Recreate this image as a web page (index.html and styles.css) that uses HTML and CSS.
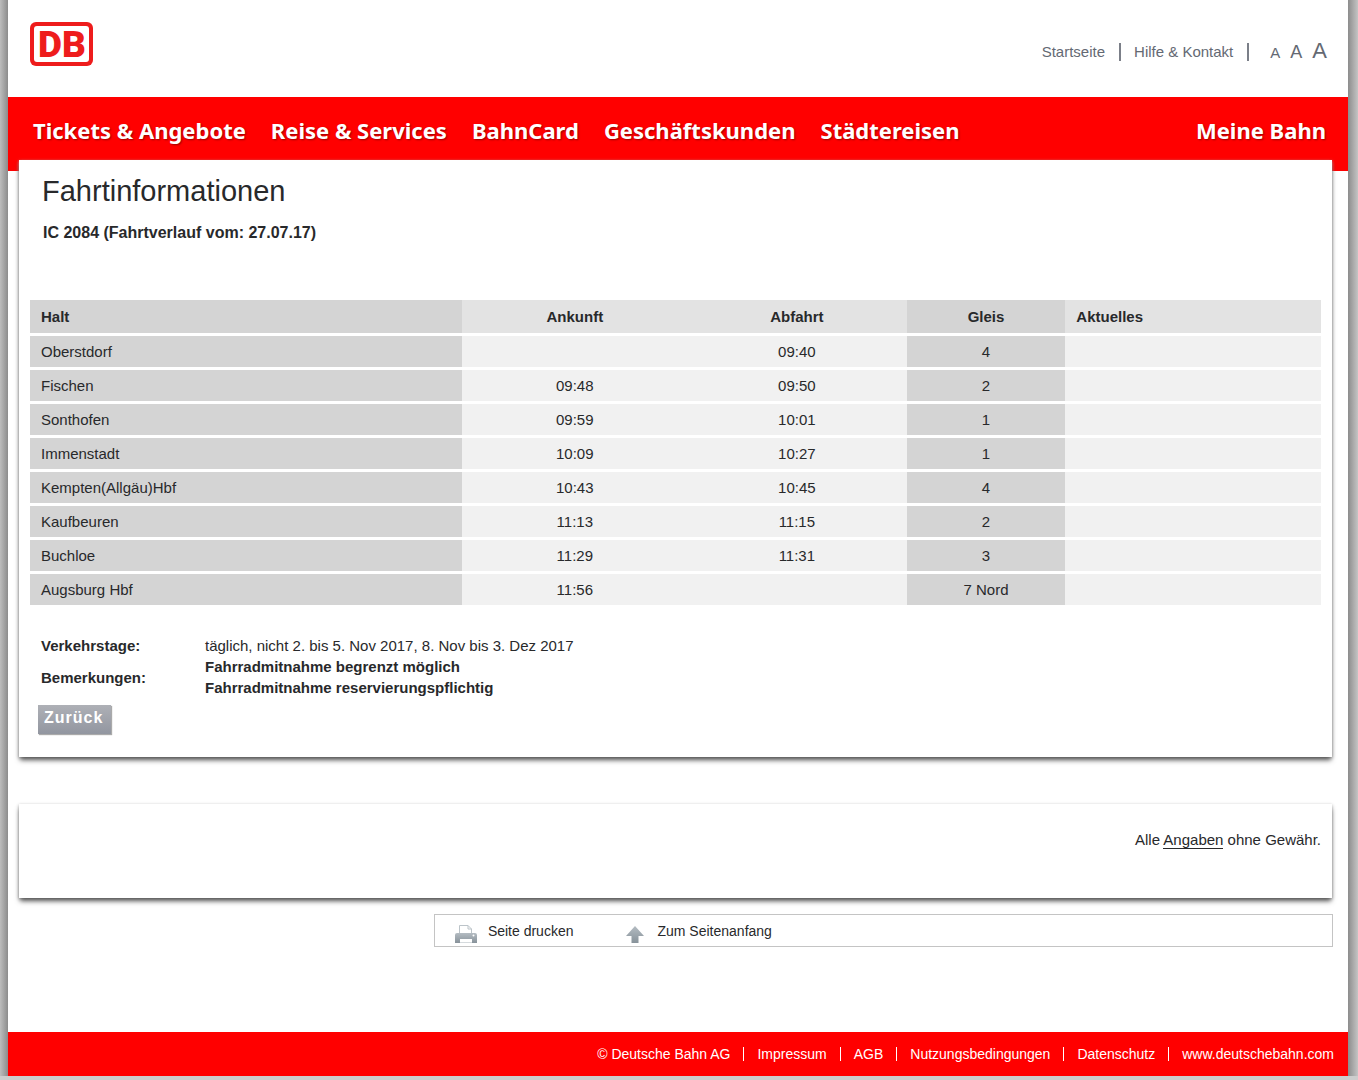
FILE: index.html
```html
<!DOCTYPE html>
<html lang="de">
<head>
<meta charset="utf-8">
<meta name="viewport" content="width=device-width, initial-scale=1">
<title>Fahrtinformationen</title>
<link rel="stylesheet" href="styles.css">
</head>
<body>
<div class="page">
  <header class="top">
    <a class="logo" href="#" aria-label="Deutsche Bahn">
      <svg width="63" height="44" viewBox="0 0 63 44">
        <rect x="0" y="0" width="63" height="44" rx="6" fill="#ee1c1c"/>
        <rect x="4" y="4" width="55" height="36" rx="3" fill="#fff"/>
        <text class="logo-text" x="32" y="35" text-anchor="middle">DB</text>
      </svg>
    </a>
    <nav class="meta">
      <a href="#">Startseite</a>
      <a href="#">Hilfe &amp; Kontakt</a>
      <div class="sizes">
        <button class="size size-s" type="button">A</button>
        <button class="size size-m" type="button">A</button>
        <button class="size size-l" type="button">A</button>
      </div>
    </nav>
  </header>
  <nav class="main-nav">
    <a href="#">Tickets &amp; Angebote</a>
    <a href="#">Reise &amp; Services</a>
    <a href="#">BahnCard</a>
    <a href="#">Geschäftskunden</a>
    <a href="#">Städtereisen</a>
    <a class="account" href="#">Meine Bahn</a>
  </nav>
  <main class="panel content">
    <h1>Fahrtinformationen</h1>
    <h2>IC 2084 (Fahrtverlauf vom: 27.07.17)</h2>
    <table class="stops">
      <thead>
        <tr><th class="halt">Halt</th><th class="arr">Ankunft</th><th class="dep">Abfahrt</th><th class="track">Gleis</th><th class="news">Aktuelles</th></tr>
      </thead>
      <tbody>
        <tr><td class="halt">Oberstdorf</td><td></td><td>09:40</td><td class="track">4</td><td></td></tr>
        <tr><td class="halt">Fischen</td><td>09:48</td><td>09:50</td><td class="track">2</td><td></td></tr>
        <tr><td class="halt">Sonthofen</td><td>09:59</td><td>10:01</td><td class="track">1</td><td></td></tr>
        <tr><td class="halt">Immenstadt</td><td>10:09</td><td>10:27</td><td class="track">1</td><td></td></tr>
        <tr><td class="halt">Kempten(Allgäu)Hbf</td><td>10:43</td><td>10:45</td><td class="track">4</td><td></td></tr>
        <tr><td class="halt">Kaufbeuren</td><td>11:13</td><td>11:15</td><td class="track">2</td><td></td></tr>
        <tr><td class="halt">Buchloe</td><td>11:29</td><td>11:31</td><td class="track">3</td><td></td></tr>
        <tr><td class="halt">Augsburg Hbf</td><td>11:56</td><td></td><td class="track">7 Nord</td><td></td></tr>
      </tbody>
    </table>
    <dl class="notes">
      <dt>Verkehrstage:</dt>
      <dd>täglich, nicht 2. bis 5. Nov 2017, 8. Nov bis 3. Dez 2017</dd>
      <dt>Bemerkungen:</dt>
      <dd class="strong">Fahrradmitnahme begrenzt möglich<br>Fahrradmitnahme reservierungspflichtig</dd>
    </dl>
    <button class="back" type="button">Zurück</button>
  </main>
  <section class="panel disclaimer">
    <p>Alle <a href="#">Angaben</a> ohne Gewähr.</p>
  </section>
  <nav class="tools">
    <a href="#">
      <svg width="22" height="18" viewBox="0 0 22 18">
        <defs><linearGradient id="g" x1="0" y1="0" x2="0" y2="1"><stop offset="0" stop-color="#b4bcc2"/><stop offset="1" stop-color="#87929a"/></linearGradient></defs>
        <path d="M4.500 8V.5H13L16.500 4V8" fill="#fff" stroke="#bcc4c9"/>
        <path d="M13 .5V4H16.500" fill="none" stroke="#bcc4c9"/>
        <path d="M2 8H20Q22 8 22 10V18H17V14H5V18H0V10Q0 8 2 8Z" fill="url(#g)"/>
        <path d="M5 14H17V18H5Z" fill="#fff"/>
        <path d="M5 17.500H17" stroke="#d5dadd"/>
        <circle cx="18.500" cy="10.500" r="1" fill="#fff"/>
      </svg>
      Seite drucken</a>
    <a href="#">
      <svg width="22" height="18" viewBox="0 0 22 18">
        <path d="M11 1L20 11H14.500V18H7.500V11H2Z" fill="url(#g)"/>
      </svg>
      Zum Seitenanfang</a>
  </nav>
  <footer class="footer">
    <span>© Deutsche Bahn AG</span>
    <a href="#">Impressum</a>
    <a href="#">AGB</a>
    <a href="#">Nutzungsbedingungen</a>
    <a href="#">Datenschutz</a>
    <a href="#">www.deutschebahn.com</a>
  </footer>
</div>
</body>
</html>
```
FILE: styles.css
```css
* {
  box-sizing: border-box;
}

body {
  margin: 0;
  padding: 0 10px 4px 8px;
  min-height: 100vh;
  display: flex;
  background:
    linear-gradient(#cdcdcd, #cdcdcd) bottom / 100% 4px no-repeat,
    linear-gradient(to right, #bdbdbd, #8c8c8c) left / 8px 100% no-repeat,
    linear-gradient(to left, #c4c4c4, #8c8c8c) right / 10px 100% no-repeat,
    #fff;
  color: #28292b;
  font: 15px/20px "Liberation Sans", Arial, sans-serif;
}

a {
  color: inherit;
  text-decoration: none;
}

.page {
  flex: 1;
  display: flex;
  flex-direction: column;
  background: #fff;
}

.top {
  display: flex;
  justify-content: space-between;
  align-items: flex-start;
  height: 97px;
  padding: 22px 21px 0 22px;
}

.logo svg {
  display: block;
}

.logo-text {
  font: 900 37px Roboto, sans-serif;
  fill: #ee1c1c;
}

.meta {
  display: flex;
  align-items: center;
  padding-top: 19px;
  color: #646973;
}

.meta > a {
  line-height: 18px;
  padding-right: 14px;
  margin-right: 13px;
  border-right: 2px solid #7b7f88;
}

.sizes {
  display: flex;
  align-items: baseline;
  gap: 10px;
  padding-left: 8px;
}

.size {
  border: 0;
  padding: 0;
  background: none;
  color: inherit;
  font-family: inherit;
  line-height: 20px;
}

.size-s { font-size: 15px; }
.size-m { font-size: 18px; }
.size-l { font-size: 22px; }

.main-nav {
  display: flex;
  gap: 25px;
  height: 74px;
  padding: 18px 22px 0 25px;
  background: #f00;
  color: #fff;
  font: bold 22px/30px "Noto Sans", sans-serif;
  text-shadow: 1px 1px 2px #900;
}

.account {
  margin-left: auto;
}

.panel {
  margin: 0 16px 0 11px;
  background: #fff;
  box-shadow: 0 4px 5px -1px #555, 0 1px 3px #aaa;
}

.content {
  margin-top: -11px;
  padding: 12px 11px 23px;
}

h1 {
  margin: 0;
  padding-left: 12px;
  font-size: 29px;
  font-weight: normal;
  line-height: 38px;
}

h2 {
  margin: 12px 0 57px;
  padding-left: 13px;
  font-size: 16px;
  line-height: 21px;
}

.stops {
  width: 100%;
  table-layout: fixed;
  border-spacing: 0;
}

.stops th,
.stops td {
  height: 34px;
  padding: 0 11px;
  border-bottom: 3px solid #fff;
  background: #f1f1f1;
  text-align: center;
}

.stops th {
  height: 36px;
  background: #e3e3e3;
}

.stops .halt,
.stops .track {
  background: #d4d4d4;
}

.stops .halt { width: 33.5%; text-align: left; }
.stops .arr { width: 17.4%; }
.stops .dep { width: 17%; }
.stops .track { width: 12.3%; }
.stops .news { text-align: left; }

.notes {
  display: grid;
  grid-template-columns: 164px 1fr;
  align-items: center;
  margin: 27px 0 7px;
  padding-left: 11px;
  line-height: 21px;
}

.notes dt,
.notes .strong {
  font-weight: bold;
}

.notes dd {
  margin: 0;
}

.back {
  display: block;
  margin-left: 8px;
  padding: 4px 8px 7px 6px;
  border: 0;
  background: linear-gradient(#aeb0b6, #9296a0);
  box-shadow: 1px 1px 1px #aaa;
  color: #fff;
  font: bold 16px/18px "Liberation Sans", Arial, sans-serif;
  letter-spacing: 1px;
}

.disclaimer {
  margin-top: 47px;
  padding: 26px 11px 48px;
  text-align: right;
}

.disclaimer p {
  margin: 0;
}

.disclaimer a {
  border-bottom: 1px solid #28292b;
}

.tools {
  display: flex;
  gap: 51px;
  width: 67.1%;
  margin: 16px 15px 0 auto;
  padding: 8px 20px 2px;
  border: 1px solid #c4c4c4;
  font-size: 14px;
  line-height: 17px;
}

.tools a {
  display: flex;
  gap: 11px;
  height: 21px;
}

.tools svg {
  margin-top: 2px;
}

.footer {
  display: flex;
  justify-content: flex-end;
  align-items: center;
  height: 44px;
  margin-top: auto;
  padding-right: 14px;
  background: #f00;
  color: #fff;
  font-size: 14px;
  line-height: 14px;
}

.footer > * + * {
  margin-left: 13px;
  padding-left: 13px;
  border-left: 1px solid #fff;
}
```
